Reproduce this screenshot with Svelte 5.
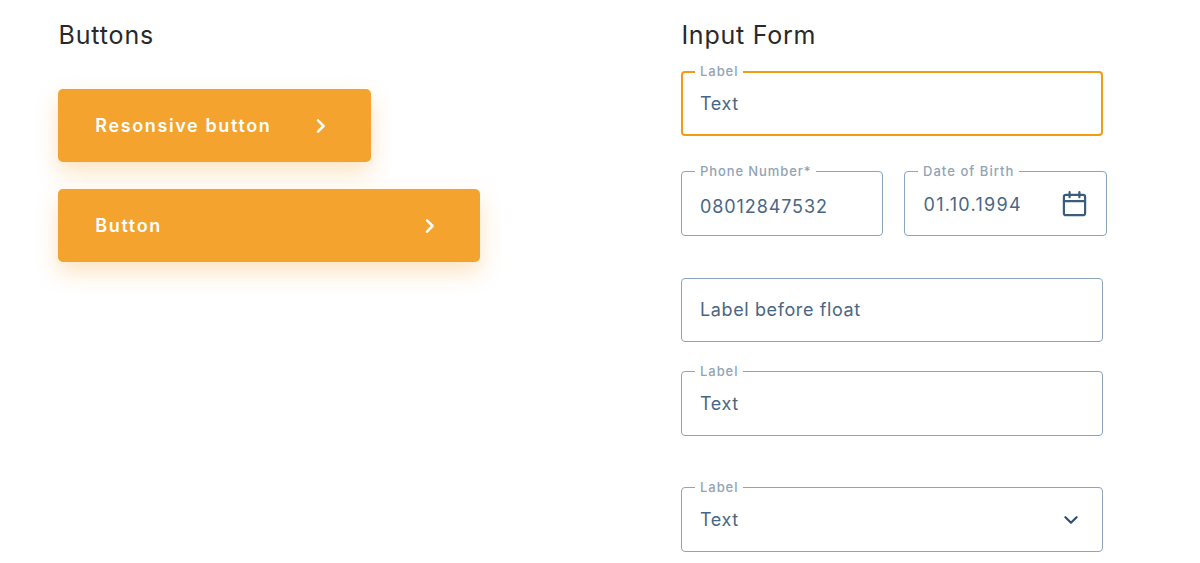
<script>
  const buttons = [
    { text: 'Resonsive button', width: 313 },
    { text: 'Button', width: 422 }
  ];
</script>

{#snippet field(label, text, cls, icon)}
  <div class="field {cls}">
    {#if label}<span class="label">{label}</span>{/if}
    <span class="value">{text}</span>
    {#if icon === 'calendar'}
      <svg class="calendar" width="26" height="28" viewBox="0 0 26 28" fill="none" stroke="#3b5c7c" stroke-width="2.2" stroke-linecap="round" stroke-linejoin="round">
        <rect x="2.9" y="4.8" width="21.2" height="20.4" rx="2" />
        <path d="M2.9 11.2H24.1M8.6 2.2V7.2M18.4 2.2V7.2" />
      </svg>
    {:else if icon === 'chevron'}
      <svg class="chevron" width="16" height="12" viewBox="0 0 16 12" fill="none" stroke="#2f4f72" stroke-width="2.2" stroke-linecap="round" stroke-linejoin="round">
        <path d="M2.4 3.2L8 8.7L13.6 3.2" />
      </svg>
    {/if}
  </div>
{/snippet}

<main>
  <section class="left">
    <h2>Buttons</h2>
    {#each buttons as b}
      <button style:width="{b.width}px">
        <span>{b.text}</span>
        <svg width="12" height="16" viewBox="0 0 12 16" fill="none" stroke="#fff" stroke-width="2.5" stroke-linecap="round" stroke-linejoin="round">
          <path d="M3 2.4L8.6 8L3 13.6" />
        </svg>
      </button>
    {/each}
  </section>
  <section class="right">
    <h2>Input Form</h2>
    {@render field('Label', 'Text', 'active')}
    <div class="row">
      {@render field('Phone Number*', '08012847532', 'phone')}
      {@render field('Date of Birth', '01.10.1994', 'date', 'calendar')}
    </div>
    {@render field('', 'Label before float', 'plain')}
    {@render field('Label', 'Text', 'filled')}
    {@render field('Label', 'Text', 'select', 'chevron')}
  </section>
</main>

<style>
  :global(body) { background: #fff; }
  main {
    display: grid;
    grid-template-columns: 623px 519px;
    height: 563px;
    overflow: hidden;
    font-family: Inter, sans-serif;
    box-sizing: border-box;
    padding-left: 58px;
  }
  h2 {
    margin: 0;
    padding: 20px 0 0 0.4px;
    height: 30px;
    font-size: 25px;
    line-height: 30px;
    font-weight: 400;
    letter-spacing: 0.75px;
    color: #292929;
  }
  button {
    display: flex;
    align-items: center;
    justify-content: space-between;
    box-sizing: border-box;
    height: 73px;
    margin: 0 0 27px;
    padding: 0 44px 0 37.3px;
    border: 0;
    border-radius: 5px;
    background: #f4a32e;
    box-shadow: 0 10px 22px rgba(244, 163, 46, 0.3);
    color: #fff;
    font: 600 18px/24px Inter, sans-serif;
    letter-spacing: 1.62px;
  }
  .left h2 { margin-bottom: 39px; letter-spacing: 0.88px; }
  .right h2 { margin-bottom: 21px; }
  .field {
    position: relative;
    display: flex;
    align-items: center;
    justify-content: space-between;
    box-sizing: border-box;
    width: 422px;
    height: 65px;
    border: 1px solid #8ba5bd;
    border-radius: 4px;
    padding: 0 23px 0 18px;
  }
  .active { border: 2px solid #f39c12; padding-left: 17px; margin-bottom: 35px; }
  .active .label { top: -10px; left: 12px; }
  .active .value, .select .value { padding-top: 1px; }
  .row { display: flex; gap: 21px; margin-bottom: 42px; }
  .phone { width: 202px; }
  .phone .value { padding-top: 6px; letter-spacing: 0.9px; }
  .phone .label { letter-spacing: 0.9px; }
  .date { width: 203px; padding-right: 19px; }
  .date .value { letter-spacing: 1.3px; padding: 2px 0 0 0.5px; }
  .date .label { letter-spacing: 1.05px; }
  .plain { height: 64px; margin-bottom: 29px; }
  .filled { margin-bottom: 51px; }
  .label {
    position: absolute;
    top: -9px;
    left: 13px;
    padding: 0 5px;
    background: #fff;
    font-size: 13px;
    line-height: 16px;
    font-weight: 500;
    letter-spacing: 0.95px;
    color: #8fa4b7;
    white-space: nowrap;
  }
  .value {
    font-size: 18px;
    line-height: 24px;
    letter-spacing: 0.62px;
    color: #496785;
    white-space: nowrap;
  }
</style>
